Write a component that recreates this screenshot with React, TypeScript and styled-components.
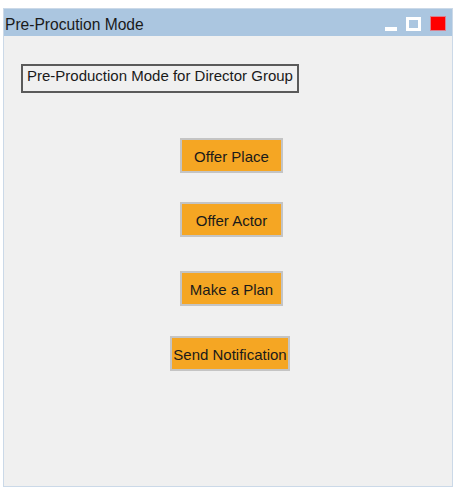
import React from "react";
import styled, { createGlobalStyle } from "styled-components";

const Global = createGlobalStyle`
  html, body { margin: 0; padding: 0; background: #ffffff; }
  body { font-family: "Liberation Sans", Arial, sans-serif; }
`;

const Window = styled.div`
  margin: 8px 0 0 3px;
  width: 450px;
  height: 479px;
  box-sizing: border-box;
  border: 1px solid #cbd9e8;
  background: #f0f0f0;
  display: flex;
  flex-direction: column;
`;

const TitleBar = styled.div`
  height: 27px;
  background: #abc6e0;
  display: flex;
  align-items: center;
  padding: 0 6px 0 1px;
  flex-shrink: 0;
`;

const Title = styled.div`
  flex: 1;
  font-size: 15.6px;
  color: #1a1a1a;
  padding-top: 4px;
`;

const Controls = styled.div`
  display: flex;
  align-items: center;
  padding-top: 2px;
`;

const MinButton = styled.div`
  width: 12px;
  height: 4px;
  background: #ffffff;
  margin-top: 10px;
  margin-right: 9px;
`;

const MaxButton = styled.div`
  width: 15px;
  height: 14px;
  box-sizing: border-box;
  border: 3px solid #ffffff;
  background: #abc6e0;
  margin-right: 9px;
`;

const CloseButton = styled.div`
  width: 16px;
  height: 15px;
  box-sizing: border-box;
  border: 1px solid #d9808f;
  background: #ff0000;
`;

const Content = styled.div`
  flex: 1;
  display: flex;
  flex-direction: column;
`;

const Heading = styled.div`
  align-self: flex-start;
  margin: 28px 0 0 17px;
  width: 278px;
  height: 29px;
  box-sizing: border-box;
  border: 2px solid #5a5a5a;
  font-size: 15px;
  color: #1a1a1a;
  padding: 1px 0 0 4px;
`;

const ButtonColumn = styled.div`
  display: flex;
  flex-direction: column;
  align-items: flex-start;
`;

const ActionButton = styled.button<{ $top: number; $left: number; $width: number }>`
  margin: ${(p) => p.$top}px 0 0 ${(p) => p.$left}px;
  width: ${(p) => p.$width}px;
  height: 35px;
  box-sizing: border-box;
  border: 2px solid #c4c4c4;
  background: #f5a623;
  color: #1a1a1a;
  font-family: "Liberation Sans", Arial, sans-serif;
  font-size: 15px;
  padding: 1px 0 0 0;
  cursor: pointer;
`;

const actions = [
  { label: "Offer Place", top: 45, left: 176, width: 103 },
  { label: "Offer Actor", top: 29, left: 176, width: 103 },
  { label: "Make a Plan", top: 34, left: 176, width: 103 },
  { label: "Send Notification", top: 30, left: 166, width: 120 },
];

export default function App() {
  return (
    <>
      <Global />
      <Window>
        <TitleBar>
          <Title>Pre-Procution Mode</Title>
          <Controls>
            <MinButton />
            <MaxButton />
            <CloseButton />
          </Controls>
        </TitleBar>
        <Content>
          <Heading>Pre-Production Mode for Director Group</Heading>
          <ButtonColumn>
            {actions.map((a) => (
              <ActionButton key={a.label} $top={a.top} $left={a.left} $width={a.width}>
                {a.label}
              </ActionButton>
            ))}
          </ButtonColumn>
        </Content>
      </Window>
    </>
  );
}
